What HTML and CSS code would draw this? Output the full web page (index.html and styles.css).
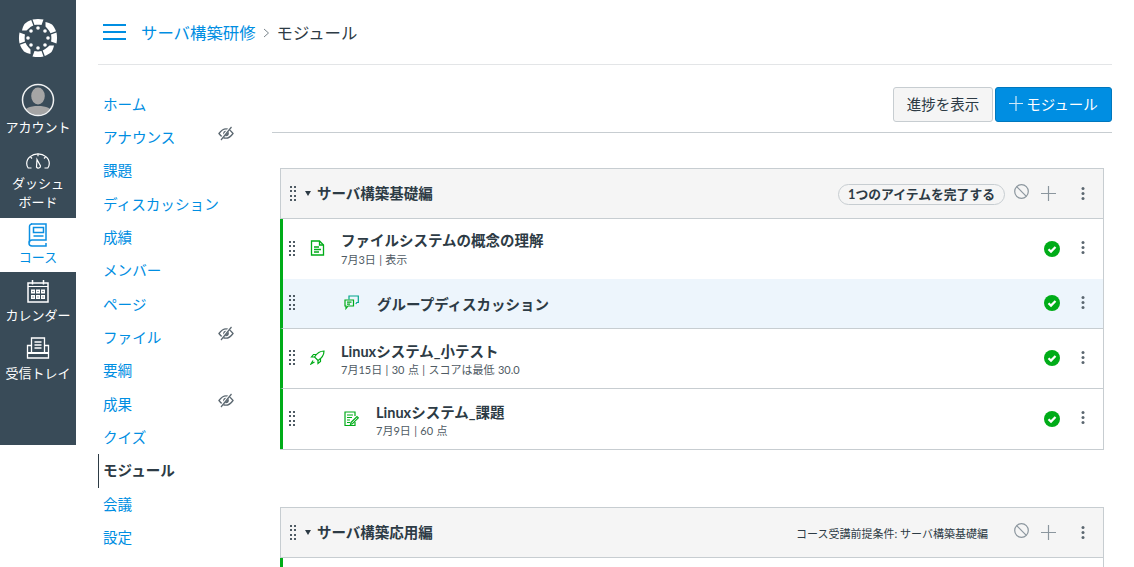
FILE: index.html
```html
<!DOCTYPE html>
<html lang="ja">
<head>
<meta charset="utf-8">
<title>モジュール</title>
<link rel="stylesheet" href="styles.css">
</head>
<body>
<svg class="defs" width="0" height="0" aria-hidden="true">
  <defs>
    <g id="grip" fill="#4f5b64"><rect x="0" y="0" width="2" height="2"/><rect x="4" y="0" width="2" height="2"/><rect x="0" y="4" width="2" height="2"/><rect x="4" y="4" width="2" height="2"/><rect x="0" y="9" width="2" height="2"/><rect x="4" y="9" width="2" height="2"/><rect x="0" y="13" width="2" height="2"/><rect x="4" y="13" width="2" height="2"/></g>
    <g id="kebab"><circle cx="2" cy="1.500" r="1.500"/><circle cx="2" cy="6.500" r="1.500"/><circle cx="2" cy="11.500" r="1.500"/></g>
    <g id="eye"><path d="M1 7.500C3.500 4 6 2.800 8 2.800s4.500 1.200 7 4.700c-2.500 3.500-5 4.700-7 4.700s-4.500-1.200-7-4.700z" fill="none" stroke="#5b6770" stroke-width="1.300"/><circle cx="8" cy="7.500" r="2.800" fill="#5b6770"/><path d="M12.500 1.200 2 14.200" stroke="#fff" stroke-width="2.200"/><path d="M13.500 1 3 14" stroke="#5b6770" stroke-width="1.200"/></g>
    <g id="check"><circle cx="8" cy="8" r="8" fill="#00ac18"/><path d="M4.500 8.200 7 10.600 11.500 6" fill="none" stroke="#fff" stroke-width="2.200"/></g>
    <g id="ban"><circle cx="7.500" cy="7.500" r="6.800" fill="none" stroke="#8b969e" stroke-width="1.200"/><path d="M2.700 2.700 12.300 12.300" stroke="#8b969e" stroke-width="1.200"/></g>
    <g id="plus"><path d="M7.500 0v15M0 7.500h15" stroke="#8b969e" stroke-width="1.200"/></g>
    <path id="wedge-a" d="M14.500 1.500C18 .8 22 .8 25.500 1.500L23.500 7C21.500 6.500 18.500 6.500 16.500 7z"/>
    <path id="wedge-b" d="M6.500 6C8.500 4.200 11 2.800 13.200 2L15.300 7.500C13.500 8.300 12 9.300 10.500 10.700L8.500 12.500 4 12.500C4.500 10 5.300 7.800 6.500 6z"/>
  </defs>
</svg>
<div class="app">
  <nav class="global-nav">
    <div class="logo">
      <svg width="40" height="40" viewBox="0 0 40 40"><g fill="#fff"><use href="#wedge-a"/><use href="#wedge-a" transform="rotate(90 20 20)"/><use href="#wedge-a" transform="rotate(180 20 20)"/><use href="#wedge-a" transform="rotate(270 20 20)"/><use href="#wedge-b"/><use href="#wedge-b" transform="rotate(90 20 20)"/><use href="#wedge-b" transform="rotate(180 20 20)"/><use href="#wedge-b" transform="rotate(270 20 20)"/><circle cx="20" cy="10" r="1.800"/><circle cx="20" cy="30" r="1.800"/><circle cx="10" cy="20" r="1.800"/><circle cx="30" cy="20" r="1.800"/><circle cx="13" cy="13" r="1.800"/><circle cx="27" cy="13" r="1.800"/><circle cx="13" cy="27" r="1.800"/><circle cx="27" cy="27" r="1.800"/></g></svg>
    </div>
    <a class="gn-item gn-account">
      <svg width="34" height="34" viewBox="0 0 34 34"><defs><clipPath id="av"><circle cx="17" cy="17" r="15"/></clipPath></defs><g clip-path="url(#av)" fill="#a5a5a5"><ellipse cx="17" cy="13" rx="6.800" ry="8.500"/><path d="M2 34c0-9 6-11 15-11s15 2 15 11z"/></g><circle cx="17" cy="17" r="15.500" fill="none" stroke="#f0f2f3" stroke-width="1.500"/></svg>
      <span>アカウント</span>
    </a>
    <a class="gn-item gn-dash">
      <svg width="24" height="16" viewBox="0 0 24 16" fill="none" stroke="#fff" stroke-width="1.200"><path d="M5.500 15H2.200C1.200 13.500.7 12 .7 10.500.7 5 6 .8 12 .8s11.300 4.200 11.300 9.700c0 1.500-.5 3-1.500 4.500h-3.300"/><path d="M11 6.500 14.500 13a2.200 2.200 0 0 1-4 1.200z"/><path d="M12 .8v2.500M4.500 4l1.500 1.500M19.500 4 18 5.500"/></svg>
      <span>ダッシュ<br>ボード</span>
    </a>
    <a class="gn-item gn-course">
      <svg width="20" height="24" viewBox="0 0 20 24" fill="none" stroke="#0b8fe2" stroke-width="1.500"><path d="M3 1h15v16H4a2.500 2.500 0 0 0 0 6h14v-3"/><path d="M1.500 19.500V3.500A2.500 2.500 0 0 1 4 1"/><rect x="5.500" y="4.500" width="10" height="5"/><path d="M5.500 13h10"/></svg>
      <span>コース</span>
    </a>
    <a class="gn-item gn-cal">
      <svg width="22" height="24" viewBox="0 0 22 24"><path d="M1 4h20v19H1z" fill="none" stroke="#fff" stroke-width="1.500"/><path d="M1 7.500h20" stroke="#fff" stroke-width="1"/><path d="M5.500 1v4.500M16.500 1v4.500" stroke="#fff" stroke-width="1.500"/><g fill="#fff"><rect x="4" y="10.500" width="4" height="4"/><rect x="9" y="10.500" width="4" height="4"/><rect x="14" y="10.500" width="4" height="4"/><rect x="4" y="16" width="4" height="4"/><rect x="9" y="16" width="4" height="4"/><rect x="14" y="16" width="4" height="4"/></g><g fill="#394b58"><rect x="5.500" y="12" width="1" height="1"/><rect x="10.500" y="12" width="1" height="1"/><rect x="15.500" y="12" width="1" height="1"/><rect x="5.500" y="17.500" width="1" height="1"/><rect x="10.500" y="17.500" width="1" height="1"/><rect x="15.500" y="17.500" width="1" height="1"/></g></svg>
      <span>カレンダー</span>
    </a>
    <a class="gn-item gn-inbox">
      <svg width="24" height="22" viewBox="0 0 24 22" fill="none" stroke="#fff" stroke-width="1.300"><path d="M5.500 15V1h13v14"/><path d="M8.500 5h7M8.500 8h7M8.500 11h7"/><path d="M5.500 8.500h-4v12.500h21V8.500h-4"/><path d="M1.500 16H22.500" stroke-width="2"/></svg>
      <span>受信トレイ</span>
    </a>
  </nav>

  <div class="page">
    <header class="topbar">
      <span class="burger"><i></i><i></i><i></i></span>
      <a class="crumb">サーバ構築研修</a>
      <svg class="crumb-sep" width="7" height="10" viewBox="0 0 7 10"><path d="M1 1l4.500 4L1 9" fill="none" stroke="#7a858c" stroke-width="1"/></svg>
      <span class="crumb-now">モジュール</span>
    </header>
    <div class="body">
      <ul class="menu">
        <li><a>ホーム</a></li>
        <li><a>アナウンス</a><svg class="m-eye" width="16" height="15" viewBox="0 0 16 15"><use href="#eye"/></svg></li>
        <li><a>課題</a></li>
        <li><a>ディスカッション</a></li>
        <li><a>成績</a></li>
        <li><a>メンバー</a></li>
        <li><a>ページ</a></li>
        <li><a>ファイル</a><svg class="m-eye" width="16" height="15" viewBox="0 0 16 15"><use href="#eye"/></svg></li>
        <li><a>要綱</a></li>
        <li><a>成果</a><svg class="m-eye" width="16" height="15" viewBox="0 0 16 15"><use href="#eye"/></svg></li>
        <li><a>クイズ</a></li>
        <li class="active"><a>モジュール</a></li>
        <li><a>会議</a></li>
        <li><a>設定</a></li>
      </ul>
      <main class="content">
        <div class="toolbar">
          <button class="btn">進捗を表示</button>
          <button class="btn primary"><svg width="14" height="15" viewBox="0 0 14 15"><path d="M7 0v15M0 7.500h14" stroke="#cfe9f9" stroke-width="1.200"/></svg>モジュール</button>
        </div>
        <section class="module first">
          <div class="mod-head">
            <svg class="grip" width="6" height="15"><use href="#grip"/></svg>
            <span class="caret"></span>
            <h2>サーバ構築基礎編</h2>
            <span class="pill">1つのアイテムを完了する</span>
            <svg class="ban" width="15" height="15"><use href="#ban"/></svg>
            <svg class="plus" width="15" height="15"><use href="#plus"/></svg>
            <svg class="kebab" width="4" height="13" fill="#5b6770"><use href="#kebab"/></svg>
          </div>
          <div class="item plain">
            <svg class="grip" width="6" height="15"><use href="#grip"/></svg>
            <svg class="type" width="15" height="16" viewBox="0 0 14 16" fill="none" stroke="#00ac18" stroke-width="1.300"><path d="M1 1h8l4 4v10H1z"/><path d="M9 1v4h4"/><path d="M3.500 7h5M3.500 9.500h7M3.500 12h5" stroke-width="1.500"/></svg>
            <div class="txt">
              <div class="title">ファイルシステムの概念の理解</div>
              <div class="meta">7月3日 | 表示</div>
            </div>
            <svg class="check" width="16" height="16"><use href="#check"/></svg>
            <svg class="kebab" width="4" height="13" fill="#5b6770"><use href="#kebab"/></svg>
          </div>
          <div class="item indent hl">
            <svg class="grip" width="6" height="15"><use href="#grip"/></svg>
            <svg class="type" width="15" height="15" viewBox="0 0 15 15" fill="none" stroke="#00ac18" stroke-width="1.200"><path d="M1 5h8.500v6H4l-2 2.500V11H1z"/><path d="M5 4.500V1h9.300v6.500h-1.500l-1 1.500" stroke="#00a58a"/><path d="M3 7.200h4.500M3 9.200h3"/></svg>
            <div class="txt"><div class="title solo">グループディスカッション</div></div>
            <svg class="check" width="16" height="16"><use href="#check"/></svg>
            <svg class="kebab" width="4" height="13" fill="#5b6770"><use href="#kebab"/></svg>
          </div>
          <div class="item">
            <svg class="grip" width="6" height="15"><use href="#grip"/></svg>
            <svg class="type" width="15" height="15" viewBox="0 0 15 15" fill="none" stroke="#00ac18" stroke-width="1.200"><path d="M14 1C10 1 7 3 4.500 7l3.500 3.500C12 8 14 5 14 1z"/><path d="M4.500 7H1.500L3.500 4.500H6.500M8 10.500V13.500L10.500 11.500V8.500"/><path d="M3 10.500 1 14l3.500-2"/></svg>
            <div class="txt">
              <div class="title latin">Linuxシステム_小テスト</div>
              <div class="meta">7月15日 | 30 点 | スコアは最低 30.0</div>
            </div>
            <svg class="check" width="16" height="16"><use href="#check"/></svg>
            <svg class="kebab" width="4" height="13" fill="#5b6770"><use href="#kebab"/></svg>
          </div>
          <div class="item indent">
            <svg class="grip" width="6" height="15"><use href="#grip"/></svg>
            <svg class="type" width="15" height="15" viewBox="0 0 15 15" fill="none" stroke="#00ac18" stroke-width="1.200"><path d="M11 5V1H1v13.500h10V11"/><path d="M3 4h6M3 6.500h5M3 9h3M3 11.500h3"/><path d="M7 11.500 13 5.500l1.300 1.300-6 6-1.800.5z"/></svg>
            <div class="txt">
              <div class="title latin">Linuxシステム_課題</div>
              <div class="meta">7月9日 | 60 点</div>
            </div>
            <svg class="check" width="16" height="16"><use href="#check"/></svg>
            <svg class="kebab" width="4" height="13" fill="#5b6770"><use href="#kebab"/></svg>
          </div>
        </section>
        <section class="module second">
          <div class="mod-head">
            <svg class="grip" width="6" height="15"><use href="#grip"/></svg>
            <span class="caret"></span>
            <h2>サーバ構築応用編</h2>
            <span class="prereq">コース受講前提条件: サーバ構築基礎編</span>
            <svg class="ban" width="15" height="15"><use href="#ban"/></svg>
            <svg class="plus" width="15" height="15"><use href="#plus"/></svg>
            <svg class="kebab" width="4" height="13" fill="#5b6770"><use href="#kebab"/></svg>
          </div>
          <div class="stub"></div>
        </section>
      </main>
    </div>
  </div>
</div>
</body>
</html>
```

FILE: styles.css
```css
* { box-sizing: border-box; }
html, body { margin: 0; height: 567px; overflow: hidden; background: #fff; }
body { font-family: Lato, "Noto Sans CJK JP", sans-serif; color: #2d3b45; }
.defs { position: absolute; }
.app { display: flex; align-items: flex-start; height: 567px; }

.global-nav { width: 76px; height: 445px; background: #394b58; flex: none; display: flex; flex-direction: column; color: #fff; }
.logo { height: 76px; display: flex; justify-content: center; padding-top: 18px; }
.gn-item { display: flex; flex-direction: column; align-items: center; font-size: 13px; line-height: 19px; text-align: center; }
.gn-item span { display: block; }
.gn-account { height: 70px; padding-top: 7px; gap: 1px; }
.gn-dash { height: 72px; padding-top: 7px; gap: 5px; }
.gn-course { height: 54px; background: #fff; color: #008ee2; padding-top: 5px; gap: 1px; }
.gn-cal { height: 59px; padding-top: 7px; gap: 3px; }
.gn-inbox { height: 60px; padding-top: 6px; gap: 5px; }

.page { flex: 1; padding: 0 22px 0 22px; min-width: 0; }
.topbar { height: 65px; border-bottom: 1px solid #e3e5e7; display: flex; align-items: center; padding-left: 5px; }
.burger { width: 23px; display: flex; flex-direction: column; gap: 5.500px; margin-right: 15px; }
.burger i { display: block; height: 1.500px; background: #008ee2; }
.crumb { font-size: 16.400px; color: #008ee2; }
.crumb-sep { margin: 2px 7px 0 7px; }
.crumb-now { font-size: 16.400px; color: #2d3b45; }

.body { display: flex; }
.menu { list-style: none; margin: 22.500px 0 0; padding: 0; width: 174px; flex: none; }
.menu li { height: 33.350px; font-size: 14.600px; line-height: 33px; padding-left: 5px; display: flex; align-items: flex-start; color: #008ee2; position: relative; }
.menu li a { flex: none; }
.m-eye { position: absolute; left: 120px; top: 5px; }
.menu li.active { border-left: 1px solid #2d3b45; padding-left: 4px; color: #2d3b45; font-weight: 700; }

.content { flex: 1; min-width: 0; }
.toolbar { height: 68px; padding-top: 22px; border-bottom: 1px solid #c7cdd1; display: flex; justify-content: flex-end; gap: 2px; align-items: flex-start; }
.btn { height: 35px; width: 100px; border: 1px solid #c7cdd1; border-radius: 3px; background: #f5f5f5; color: #2d3b45; font: 400 14.500px Lato, "Noto Sans CJK JP", sans-serif; padding: 0 0 2px; display: flex; align-items: center; justify-content: center; }
.btn.primary { background: #008ee2; border-color: #0077bd; color: #fff; gap: 3px; width: 117px; }

.module { margin: 0 8px; border: 1px solid #c7cdd1; }
.module.first { margin-top: 35px; }
.module.second { margin-top: 57px; border-bottom: 0; }
.mod-head { height: 50px; background: #f5f5f5; border-bottom: 1px solid #c7cdd1; display: flex; align-items: center; padding-left: 9px; }
.mod-head .grip { margin-top: -1px; }
.caret { width: 0; height: 0; border-left: 3px solid transparent; border-right: 3px solid transparent; border-top: 5px solid #2d3b45; margin: 0 6px 0 9px; }
.mod-head h2 { margin: 0 0 3px; font-size: 14.500px; font-weight: 700; color: #2d3b45; flex: 1; }
.pill { height: 21px; border: 1px solid #c7cdd1; border-radius: 11px; font-size: 12.800px; font-weight: 700; line-height: 19px; padding: 0 9px; margin-right: 9px; margin-top: 1px; }
.prereq { font-size: 11px; margin-right: 26px; }
.ban { margin-right: 12px; margin-top: -4px; }
.plus { margin-right: 25px; margin-top: -1px; }
.mod-head .kebab { margin-right: 18px; margin-top: -1px; }

.item { display: flex; align-items: center; height: 60px; margin-left: -1px; border-left: 3px solid #00ac18; border-bottom: 1px solid #c7cdd1; padding-left: 6px; }
.item.plain { border-bottom: 0; }
.item:last-child { border-bottom: 0; }
.item.hl { background: #edf5fc; height: 50px; }
.item .grip { margin-top: -2px; flex: none; }
.item .type { margin-left: 15px; flex: none; margin-top: -2px; }
.item .txt { margin-left: 16px; flex: 1; min-width: 0; }
.item.indent .type { margin-left: 49px; }
.item.indent .txt { margin-left: 17px; }
.title { font-size: 14.500px; font-weight: 700; line-height: 20px; }
.title.solo { margin-top: 2px; margin-left: 1px; }
.title.latin { margin-top: 3px; margin-bottom: -1px; }
.meta { font-size: 11px; line-height: 16px; color: #4f5b64; margin-top: 1px; word-spacing: 0.600px; }
.check { margin-right: 21px; flex: none; margin-top: -1px; }
.item .kebab { margin-right: 18px; flex: none; margin-top: -3px; }
.stub { height: 10px; margin-left: -1px; border-left: 3px solid #00ac18; }
```
